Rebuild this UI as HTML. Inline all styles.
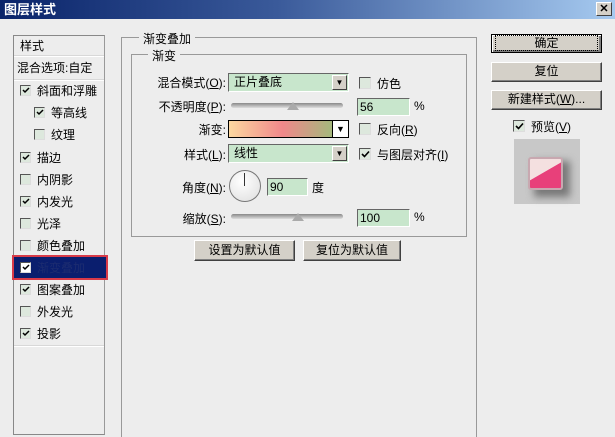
<!DOCTYPE html><html><head><meta charset="utf-8"><style>
*{margin:0;padding:0;box-sizing:border-box}
body{width:615px;height:429px;overflow:hidden;background:#ededed;font-family:"Liberation Sans","Noto Sans CJK SC","WenQuanYi Zen Hei",sans-serif;font-size:12px;color:#000;position:relative}
.a{position:absolute;white-space:nowrap}
.title{left:0;top:0;width:615px;height:19px;background:linear-gradient(90deg,#0a246a,#3a5a9a 45%,#a6caf0);color:#fff;font-weight:bold;font-size:13px;line-height:19px;padding-left:4px}
.x{right:3px;top:2px;width:16px;height:14px;background:#d4d0c8;border:1px solid;border-color:#fff #404040 #404040 #fff;font-size:11px;line-height:12px;text-align:center;font-weight:bold}
.lp{left:13px;top:35px;width:92px;height:400px;border:1px solid #888;border-right-color:#999}
.sep{position:absolute;left:0;width:90px;height:2px;border-top:1px solid #d8d8d8;border-bottom:1px solid #fff}
.it{position:absolute;left:6px;font-size:12px;line-height:16px}
.cb{display:inline-block;width:11px;height:11px;border:1px solid;border-color:#555 #ddd #ddd #555;background:#dde8dd;vertical-align:-1px;margin-right:6px;position:relative;overflow:hidden}
.cb svg{position:absolute;left:1px;top:1px}
.grp{border:1px solid #999;border-bottom:none}
.lbl{background:#ededed;padding:0 4px}
.sel{background:#c8e6cc;border:1px solid;border-color:#666 #fff #fff #666;height:19px;padding-left:5px;line-height:17px}
.arr{position:absolute;right:1px;top:1px;width:15px;height:15px;background:#d4d0c8;border:1px solid;border-color:#fff #404040 #404040 #fff;font-size:8px;text-align:center;line-height:13px}
.inp{background:#c8e6cc;border:1px solid;border-color:#666 #fff #fff #666;height:18px;padding-left:2px;line-height:16px}
.sl{height:5px;border-radius:3px;background:linear-gradient(#888,#ddd);}
.th{width:0;height:0;border-left:6px solid transparent;border-right:6px solid transparent;border-bottom:8px solid #aaa}
.btn{background:#d4d0c8;border:1px solid;border-color:#fff #404040 #404040 #fff;box-shadow:inset -1px -1px #808080;text-align:center;line-height:17px}
.r{text-align:right}
</style></head><body>
<div class="a title">图层样式</div><div class="a x">✕</div>
<div class="a lp">
<div class="it" style="top:2px">样式</div><div class="sep" style="top:19px"></div>
<div class="it" style="left:3px;top:24px">混合选项:自定</div><div class="sep" style="top:43px"></div>
<div class="it" style="top:47px"><span class="cb"><svg width="8" height="7"><path d="M1 3l2 2 4-4" stroke="#000" stroke-width="1.5" fill="none"/></svg></span>斜面和浮雕</div>
<div class="it" style="left:20px;top:69px"><span class="cb"><svg width="8" height="7"><path d="M1 3l2 2 4-4" stroke="#000" stroke-width="1.5" fill="none"/></svg></span>等高线</div>
<div class="it" style="left:20px;top:91px"><span class="cb"></span>纹理</div>
<div class="it" style="top:114px"><span class="cb"><svg width="8" height="7"><path d="M1 3l2 2 4-4" stroke="#000" stroke-width="1.5" fill="none"/></svg></span>描边</div>
<div class="it" style="top:136px"><span class="cb"></span>内阴影</div>
<div class="it" style="top:158px"><span class="cb"><svg width="8" height="7"><path d="M1 3l2 2 4-4" stroke="#000" stroke-width="1.5" fill="none"/></svg></span>内发光</div>
<div class="it" style="top:180px"><span class="cb"></span>光泽</div>
<div class="it" style="top:202px"><span class="cb"></span>颜色叠加</div>
<div style="position:absolute;left:-2px;top:219px;width:96px;height:25px;border:2px solid #d83a48;background:#0a1e6e"></div>
<div class="it" style="top:224px;color:#1c2c70"><span class="cb" style="background:#fff"><svg width="8" height="7"><path d="M1 3l2 2 4-4" stroke="#000" stroke-width="1.5" fill="none"/></svg></span>渐变叠加</div>
<div class="it" style="top:246px"><span class="cb"><svg width="8" height="7"><path d="M1 3l2 2 4-4" stroke="#000" stroke-width="1.5" fill="none"/></svg></span>图案叠加</div>
<div class="it" style="top:268px"><span class="cb"></span>外发光</div>
<div class="it" style="top:290px"><span class="cb"><svg width="8" height="7"><path d="M1 3l2 2 4-4" stroke="#000" stroke-width="1.5" fill="none"/></svg></span>投影</div>
<div class="sep" style="top:309px"></div>
</div>
<div class="a grp" style="left:121px;top:37px;width:356px;height:400px"></div>
<div class="a lbl" style="left:139px;top:30px">渐变叠加</div>
<div class="a grp" style="left:131px;top:54px;width:336px;height:183px;border-bottom:1px solid #999"></div>
<div class="a lbl" style="left:148px;top:47px">渐变</div>
<div class="a r" style="left:140px;width:86px;top:74px">混合模式(<u>O</u>):</div>
<div class="a sel" style="left:228px;top:73px;width:121px">正片叠底<div class="arr">▼</div></div>
<div class="a" style="left:359px;top:75px"><span class="cb" style="width:12px;height:12px"></span>仿色</div>
<div class="a r" style="left:140px;width:86px;top:98px">不透明度(<u>P</u>):</div>
<div class="a sl" style="left:231px;top:103px;width:112px"></div><div class="a th" style="left:287px;top:102px"></div>
<div class="a inp" style="left:357px;top:98px;width:53px">56</div><div class="a" style="left:414px;top:99px">%</div>
<div class="a r" style="left:140px;width:86px;top:121px">渐变:</div>
<div class="a" style="left:228px;top:120px;width:121px;height:18px;border:1px solid #000;background:linear-gradient(90deg,#fcd8a0,#f0888a 45%,#8cc878 100%)"><div style="position:absolute;right:0;top:0;width:16px;height:16px;background:#fff;border-left:1px solid #000;font-size:9px;text-align:center;line-height:16px">▼</div></div>
<div class="a" style="left:359px;top:121px"><span class="cb" style="width:12px;height:12px"></span>反向(<u>R</u>)</div>
<div class="a r" style="left:140px;width:86px;top:146px">样式(<u>L</u>):</div>
<div class="a sel" style="left:228px;top:144px;width:121px">线性<div class="arr">▼</div></div>
<div class="a" style="left:359px;top:146px"><span class="cb" style="width:12px;height:12px"><svg width="9" height="8"><path d="M1 4l2.5 2.5 4.5-5" stroke="#000" stroke-width="1.6" fill="none"/></svg></span>与图层对齐(<u>I</u>)</div>
<div class="a r" style="left:140px;width:86px;top:179px">角度(<u>N</u>):</div>
<div class="a" style="left:229px;top:170px;width:32px;height:32px;border-radius:50%;border:1px solid #777;background:radial-gradient(circle at 40% 35%,#fff,#ddd)"><div style="position:absolute;left:14px;top:2px;width:1px;height:13px;background:#333"></div></div>
<div class="a inp" style="left:267px;top:178px;width:41px">90</div><div class="a" style="left:312px;top:179px">度</div>
<div class="a r" style="left:140px;width:86px;top:210px">缩放(<u>S</u>):</div>
<div class="a sl" style="left:231px;top:214px;width:112px"></div><div class="a th" style="left:292px;top:213px"></div>
<div class="a inp" style="left:357px;top:209px;width:53px">100</div><div class="a" style="left:414px;top:210px">%</div>
<div class="a btn" style="left:194px;top:240px;width:101px;height:21px;line-height:19px">设置为默认值</div>
<div class="a btn" style="left:303px;top:240px;width:98px;height:21px;line-height:19px">复位为默认值</div>
<div class="a btn" style="left:491px;top:34px;width:111px;height:19px;border:1px solid #000;box-shadow:inset 1px 1px #fff,inset -2px -2px #808080"><span style="border:1px dotted #000;padding:0 38px">确定</span></div>
<div class="a btn" style="left:491px;top:62px;width:111px;height:20px">复位</div>
<div class="a btn" style="left:491px;top:90px;width:111px;height:20px">新建样式(<u>W</u>)...</div>
<div class="a" style="left:513px;top:118px"><span class="cb" style="width:12px;height:12px"><svg width="9" height="8"><path d="M1 4l2.5 2.5 4.5-5" stroke="#000" stroke-width="1.6" fill="none"/></svg></span>预览(<u>V</u>)</div>
<div class="a" style="left:514px;top:139px;width:66px;height:65px;background:#c8c8c8"><div style="position:absolute;left:20px;top:22px;width:36px;height:36px;background:#777;filter:blur(4px)"></div><div style="position:absolute;left:14px;top:18px;width:35px;height:33px;border-radius:3px;border:2px solid #c8a8b0;background:linear-gradient(150deg,#f4e0e0 45%,#e8407a 46%)"></div></div>
</body></html>
